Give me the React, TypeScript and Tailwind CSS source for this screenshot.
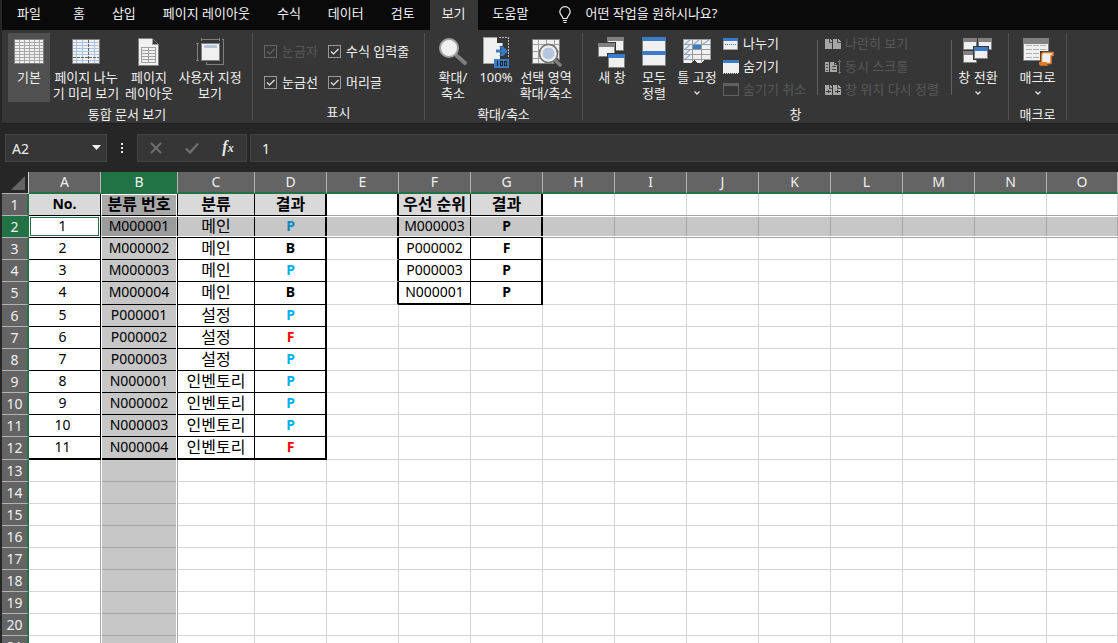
import React from "react";

type IconProps = { children: React.ReactNode };

function BigIcon({ children }: IconProps) {
  return (
    <svg className="h-8 w-8 shrink-0" viewBox="0 0 32 32" shapeRendering="crispEdges" aria-hidden="true">
      {children}
    </svg>
  );
}

function SmallIcon({ children }: IconProps) {
  return (
    <svg className="h-4 w-4 shrink-0" viewBox="0 0 16 16" shapeRendering="crispEdges" aria-hidden="true">
      {children}
    </svg>
  );
}

const range = (n: number) => Array.from({ length: n }, (_, i) => i);

function NormalIcon() {
  return (
    <BigIcon>
      <rect x="1.5" y="3.5" width="29" height="24" fill="#f0f0f0" stroke="#808080" />
      {range(5).map((i) => (
        <rect key={i} x={6 + i * 5} y="4" width="1" height="23" fill="#a8a8a8" />
      ))}
      {range(7).map((i) => (
        <rect key={i} x="2" y={6 + i * 3} width="28" height="1" fill="#a8a8a8" />
      ))}
    </BigIcon>
  );
}

function PageBreakIcon() {
  return (
    <BigIcon>
      <rect x="2.5" y="3.5" width="27" height="24" fill="#f0f0f0" stroke="#808080" />
      {[6, 12, 24].map((x) => (
        <rect key={x} x={x} y="4" width="1" height="23" fill="#a9c4e2" />
      ))}
      {[6, 9, 12, 15, 18, 24].map((y) => (
        <rect key={y} x="3" y={y} width="26" height="1" fill="#a9c4e2" />
      ))}
      <path d="M18.5 4V27" stroke="#666" strokeDasharray="3 1" />
      <path d="M3 21.5H29" stroke="#666" strokeDasharray="3 1" />
    </BigIcon>
  );
}

function PageLayoutIcon() {
  return (
    <BigIcon>
      <path d="M5.5 2.5H19.5L25.5 8.5V29.5H5.5Z" fill="#f0f0f0" stroke="#808080" />
      <path d="M19 2L26 9H19Z" fill="#363636" />
      <path d="M19.5 2.5V8.5H25.5" fill="none" stroke="#a0a0a0" />
      <path d="M19.5 2.5L25.5 8.5" fill="none" stroke="#707070" shapeRendering="auto" />
      <path d="M8.5 11.5H22.5V26.5H8.5ZM8.5 14.5H22.5M8.5 17.5H22.5M8.5 20.5H22.5M8.5 23.5H22.5M15.5 11.5V26.5" fill="none" stroke="#a0a0a0" />
    </BigIcon>
  );
}

function CustomViewIcon() {
  return (
    <BigIcon>
      <path d="M7.5 2V5M25.5 2V5M7.5 3.5H25.5M2 7.5H5M2 24.5H5M3.5 7.5V24.5" fill="none" stroke="#808080" />
      <path d="M28 3.5H29.5V28.5H12.5V26" fill="none" stroke="#808080" />
      <rect x="7.5" y="7.5" width="18" height="17" fill="#f0f0f0" stroke="#808080" />
      <rect x="10" y="9" width="13" height="3" fill="#b4c7df" />
    </BigIcon>
  );
}

function ZoomIcon() {
  return (
    <BigIcon>
      <g shapeRendering="auto">
        <path d="M19 19L28 27" stroke="#808080" strokeWidth="4" strokeLinecap="round" />
        <circle cx="12" cy="12" r="9" fill="#f0f0f0" stroke="#a0a0a0" strokeWidth="2" />
      </g>
    </BigIcon>
  );
}

function HundredIcon() {
  return (
    <BigIcon>
      <path d="M3.5 1.5H16.5L22.5 7.5V27.5H3.5Z" fill="#f0f0f0" stroke="#a0a0a0" />
      <path d="M17 1L23 7H17Z" fill="#363636" />
      <path d="M19 1.5H28.5V22" fill="none" stroke="#c0c0c0" strokeDasharray="2 1" />
      <path d="M20 10H28V24H20Z" fill="#363636" />
      <path d="M16 13.500H22L19 10.500H23L28 15L23 20H19L22 16.500H16Z" fill="#3b7cc8" shapeRendering="auto" />
      <rect x="14" y="23" width="15" height="9" fill="#3b7cc8" />
      <path d="M17.500 25V30M20.500 25.500H22.500V29.500H20.500ZM24.500 25.500H26.500V29.500H24.500Z" stroke="#222" fill="none" />
    </BigIcon>
  );
}

function ZoomSelectionIcon() {
  return (
    <BigIcon>
      <rect x="2.500" y="3.500" width="27" height="24" fill="#f0f0f0" stroke="#808080" />
      <path d="M8.500 4V27M16.500 4V27M24.500 4V27M3 8.500H29M3 15.500H29M3 22.500H29" stroke="#a0a0a0" />
      <g shapeRendering="auto">
        <path d="M24 23L30 29" stroke="#363636" strokeWidth="6" />
        <path d="M24 23L30 29" stroke="#808080" strokeWidth="3.500" strokeLinecap="round" />
        <circle cx="18.500" cy="17.500" r="9" fill="#f0f0f0" stroke="#777" strokeWidth="2" />
        <circle cx="18.500" cy="17.500" r="7" fill="#b4c7df" stroke="#f0f0f0" strokeWidth="2" />
      </g>
    </BigIcon>
  );
}

function Pane({ x, y, w, h, top }: { x: number; y: number; w: number; h: number; top: string }) {
  return (
    <g>
      <rect x={x - 1} y={y - 1} width={w + 2} height={h + 2} fill="#363636" />
      <rect x={x} y={y} width={w} height={h} fill="#808080" />
      <rect x={x + 1} y={y + 4} width={w - 2} height={h - 5} fill="#f0f0f0" />
      <rect x={x} y={y} width={w} height="4" fill={top} />
    </g>
  );
}

function NewWindowIcon() {
  return (
    <BigIcon>
      <Pane x={11} y={1} w={17} h={14} top="#808080" />
      <Pane x={2} y={7} w={17} h={14} top="#808080" />
      <Pane x={12} y={18} w={17} h={14} top="#3b7cc8" />
    </BigIcon>
  );
}

function ArrangeIcon() {
  return (
    <BigIcon>
      <rect x="4" y="1" width="24" height="29" fill="#808080" />
      <rect x="5" y="5" width="22" height="24" fill="#f0f0f0" />
      <rect x="4" y="1" width="24" height="4" fill="#3b7cc8" />
      <rect x="4" y="15" width="24" height="4" fill="#3b7cc8" />
    </BigIcon>
  );
}

function FreezeIcon() {
  return (
    <BigIcon>
      <path d="M2 3H30V23H24L20 27H16L13 24L10 27H2Z" fill="#f0f0f0" />
      <path d="M2.500 27V3.500H29.500V23.500M11.500 3.500V26M20.500 3.500V26M2.500 8.500H29.500M2.500 13.500H29.500M2.500 18.500H29.500M2.500 23.500H29.500" fill="none" stroke="#9a9a9a" />
      <rect x="12" y="9" width="8" height="4" fill="#3b7cc8" />
      <path d="M4 8L9 4M13 8L18 4M22 8L28 4M4 13L9 9M4 18L9 14M4 23L9 19" stroke="#8fb2dc" strokeWidth="1.500" shapeRendering="auto" />
    </BigIcon>
  );
}

function SwitchIcon() {
  return (
    <BigIcon>
      <Pane x={1} y={2} w={14} h={12} top="#808080" />
      <Pane x={16} y={2} w={14} h={12} top="#808080" />
      <Pane x={1} y={15} w={14} h={12} top="#808080" />
      <Pane x={12} y={11} w={14} h={12} top="#3b7cc8" />
    </BigIcon>
  );
}

function MacroIcon() {
  return (
    <BigIcon>
      <Pane x={1} y={2} w={26} h={23} top="#808080" />
      <rect x="2" y="6" width="24" height="2" fill="#808080" />
      <path d="M4 9.500H24M4 13.500H24M4 17.500H18M4 21.500H18" stroke="#b0b0b0" strokeDasharray="6 1" />
      <path d="M18 15H31V20H29V29H18Z" fill="#363636" />
      <g shapeRendering="auto">
        <path d="M21 16.500H31V19.500H29V27.500H19.500V18Z" fill="#f0f0f0" stroke="#e07a24" strokeWidth="1.500" />
        <path d="M17 26H25V28.500L27 29.800H18.500Q17 29.500 17 28Z" fill="#e07a24" />
      </g>
    </BigIcon>
  );
}

function SplitIcon() {
  return (
    <SmallIcon>
      <rect x=".5" y="2.500" width="14" height="11" fill="#f0f0f0" stroke="#a0a0a0" />
      <rect x="0" y="2" width="15" height="3" fill="#3b7cc8" />
      <path d="M2 8.500H13" stroke="#3b7cc8" strokeDasharray="1 1" />
    </SmallIcon>
  );
}

function HideIcon() {
  return (
    <SmallIcon>
      <rect x="0" y="2" width="16" height="12" fill="#f0f0f0" />
      <rect x="0" y="1" width="16" height="3" fill="#3b7cc8" />
      <path d="M0 14.500H16" fill="none" stroke="#d0d0d0" strokeDasharray="1 1" />
    </SmallIcon>
  );
}

function UnhideIcon() {
  return (
    <SmallIcon>
      <rect x=".5" y="1.500" width="15" height="12" fill="none" stroke="#606060" />
      <rect x="0" y="1" width="16" height="3" fill="#606060" />
    </SmallIcon>
  );
}

function PairIcon({ mark }: { mark?: string }) {
  return (
    <SmallIcon>
      <path d="M0 3H5L7 5V13H0ZM8 3H13L16 5V13H8Z" fill="#a6a6a6" />
      <path d="M4.500 3V6.500H7M12.500 3V6.500H16" fill="none" stroke="#4a4a4a" />
      {mark && <path d={mark} stroke="#363636" fill="none" />}
    </SmallIcon>
  );
}

function SyncIcon() {
  return (
    <SmallIcon>
      <path d="M0 3H4V13H0ZM5 3H10L12 6V13H5Z" fill="#a6a6a6" />
      <path d="M1 5.500H3M1 8.500H3M1 11.500H3M7 7.500H11M7 10.500H11M9.500 3V5.500H12" fill="none" stroke="#4a4a4a" />
      <path d="M14.500 1V15M13 2.500H16M13 13.500H16" fill="none" stroke="#777" />
    </SmallIcon>
  );
}

function Chevron() {
  return (
    <svg className="h-4 w-2" viewBox="0 0 8 16" aria-hidden="true">
      <path d="M1.500 6.500L4 9L6.500 6.500" fill="none" stroke="#e0e0e0" strokeWidth="1.300" />
    </svg>
  );
}

type BigButtonProps = { icon: React.ReactNode; lines: string[]; width: string; active?: boolean; menu?: boolean };

function BigButton({ icon, lines, width, active, menu }: BigButtonProps) {
  return (
    <button
      type="button"
      className={`flex h-[69px] shrink-0 flex-col items-center pt-[3px] ${width} ${active ? "bg-[#505050]" : ""}`}
    >
      {icon}
      <span className="flex flex-col items-center pt-px leading-4 whitespace-nowrap">
        {lines.map((l) => (
          <span key={l}>{l}</span>
        ))}
      </span>
      {menu && <Chevron />}
    </button>
  );
}

function SmallButton({ icon, label, disabled }: { icon: React.ReactNode; label: string; disabled?: boolean }) {
  return (
    <button
      type="button"
      disabled={disabled}
      className={`flex h-[23px] items-center gap-1 pb-[2px] whitespace-nowrap ${disabled ? "text-[#585858]" : ""}`}
    >
      {icon}
      <span>{label}</span>
    </button>
  );
}

function Check({ label, disabled }: { label: string; disabled?: boolean }) {
  return (
    <label className={`flex h-[31px] items-center gap-[5px] whitespace-nowrap ${disabled ? "text-[#585858]" : ""}`}>
      <span className="relative block h-[13px] w-[13px] shrink-0">
        <input
          type="checkbox"
          defaultChecked
          disabled={disabled}
          className={`block h-[13px] w-[13px] appearance-none border ${disabled ? "border-[#666]" : "border-[#999]"}`}
        />
        <svg className="pointer-events-none absolute inset-0" viewBox="0 0 13 13" aria-hidden="true">
          <path d="M3 6.500L5.500 9L10.500 4" fill="none" stroke={disabled ? "#666" : "#e8e8e8"} strokeWidth="1.200" />
        </svg>
      </span>
      {label}
    </label>
  );
}

type GroupProps = { label: string; width: string; inset?: string; children: React.ReactNode };

function Group({ label, width, inset = "", children }: GroupProps) {
  return (
    <section aria-label={label} className={`my-[3px] flex shrink-0 flex-col border-r border-[#505050] ${width}`}>
      <div className={`flex h-[70px] ${inset}`}>{children}</div>
      <div className="pt-1 text-center leading-4">{label}</div>
    </section>
  );
}

function Divider() {
  return <div className="mt-[7px] h-[55px] w-px shrink-0 bg-[#606060]" />;
}

const tabs = ["파일", "홈", "삽입", "페이지 레이아웃", "수식", "데이터", "검토", "보기", "도움말"];

function MenuBar() {
  return (
    <nav className="flex h-[30px] items-stretch bg-[#0a0a0a] pl-[3px]">
      {tabs.map((t, i) => (
        <button
          key={t}
          type="button"
          className={`mr-[3px] px-3 pb-[2px] whitespace-nowrap first:mr-2 ${i === 7 ? "bg-[#363636]" : ""}`}
        >
          {t}
        </button>
      ))}
      <button type="button" className="ml-4 flex items-center gap-[14px] pb-[2px] whitespace-nowrap">
        <svg className="mt-[2px] h-[18px] w-3" viewBox="0 0 12 18" fill="none" stroke="#f0f0f0" strokeWidth="1.200" aria-hidden="true">
          <path d="M4 12.500C4 10 .8 9 .8 5.800A5.200 5.200 0 0 1 11.200 5.800C11.200 9 8 10 8 12.500ZM4 14.500H8M4.500 16.500H7.500" />
        </svg>
        <span>어떤 작업을 원하시나요?</span>
      </button>
    </nav>
  );
}

function Ribbon() {
  return (
    <div className="flex h-[94px] border-b border-[#1e1e1e] bg-[#363636]">
      <Group label="통합 문서 보기" width="w-[251px]" inset="pl-[6px]">
        <BigButton icon={<NormalIcon />} lines={["기본"]} width="w-[42px]" active />
        <BigButton icon={<PageBreakIcon />} lines={["페이지 나누", "기 미리 보기"]} width="w-[72px]" />
        <BigButton icon={<PageLayoutIcon />} lines={["페이지", "레이아웃"]} width="w-[54px]" />
        <BigButton icon={<CustomViewIcon />} lines={["사용자 지정", "보기"]} width="w-[68px]" />
      </Group>
      <Group label="표시" width="w-[172px]">
        <div className="grid grid-cols-[64px_auto] content-start pt-[3px] pl-[11px]">
          <Check label="눈금자" disabled />
          <Check label="수식 입력줄" />
          <Check label="눈금선" />
          <Check label="머리글" />
        </div>
      </Group>
      <Group label="확대/축소" width="w-[158px]" inset="pl-[7px]">
        <BigButton icon={<ZoomIcon />} lines={["확대/", "축소"]} width="w-[42px]" />
        <BigButton icon={<HundredIcon />} lines={["100%"]} width="w-[44px]" />
        <BigButton icon={<ZoomSelectionIcon />} lines={["선택 영역", "확대/축소"]} width="w-[56px]" />
      </Group>
      <Group label="창" width="w-[426px]" inset="pl-[9px]">
        <BigButton icon={<NewWindowIcon />} lines={["새 창"]} width="w-10" />
        <BigButton icon={<ArrangeIcon />} lines={["모두", "정렬"]} width="w-11" />
        <BigButton icon={<FreezeIcon />} lines={["틀 고정"]} width="w-[42px]" menu />
        <div className="flex w-[99px] flex-col pl-[5px]">
          <SmallButton icon={<SplitIcon />} label="나누기" />
          <SmallButton icon={<HideIcon />} label="숨기기" />
          <SmallButton icon={<UnhideIcon />} label="숨기기 취소" disabled />
        </div>
        <Divider />
        <div className="flex w-[133px] flex-col pl-[7px]">
          <SmallButton icon={<PairIcon />} label="나란히 보기" disabled />
          <SmallButton icon={<SyncIcon />} label="동시 스크롤" disabled />
          <SmallButton icon={<PairIcon mark="M1 9.500H6M3.500 8V11M10 9.500H15M12.500 8V11" />} label="창 위치 다시 정렬" disabled />
        </div>
        <Divider />
        <BigButton icon={<SwitchIcon />} lines={["창 전환"]} width="w-[52px]" menu />
      </Group>
      <Group label="매크로" width="w-[58px]">
        <BigButton icon={<MacroIcon />} lines={["매크로"]} width="w-[57px]" menu />
      </Group>
    </div>
  );
}

function FormulaBar() {
  return (
    <div className="flex h-12 items-center pt-px pr-0 pb-px pl-[3px]">
      <div className="relative h-7 w-[102px] shrink-0">
        <input
          aria-label="이름 상자"
          defaultValue="A2"
          className="h-7 w-full border border-[#444] bg-[#363636] pl-[6px] text-sm text-[#f0f0f0]"
        />
        <svg className="pointer-events-none absolute top-[11px] right-[6px] h-[5px] w-[9px]" viewBox="0 0 9 5" aria-hidden="true">
          <path d="M0 0H9L4.500 5Z" fill="#f0f0f0" />
        </svg>
      </div>
      <svg className="h-7 w-[30px] shrink-0" viewBox="0 0 30 28" fill="#e8e8e8" aria-hidden="true">
        <path d="M14 9H16V11H14ZM14 13H16V15H14ZM14 17H16V19H14Z" />
      </svg>
      <div className="flex h-7 w-[110px] shrink-0 items-center border border-[#444] bg-[#363636]">
        <button type="button" aria-label="취소" className="flex flex-1 justify-center">
          <svg className="h-3 w-3" viewBox="0 0 12 12" aria-hidden="true">
            <path d="M1 1L11 11M11 1L1 11" stroke="#707070" strokeWidth="1.800" />
          </svg>
        </button>
        <button type="button" aria-label="입력" className="flex flex-1 justify-center">
          <svg className="h-3 w-[14px]" viewBox="0 0 14 12" aria-hidden="true">
            <path d="M1 6.500L5 10.500L13 1.500" fill="none" stroke="#707070" strokeWidth="2.400" />
          </svg>
        </button>
        <button type="button" aria-label="함수 삽입" className="flex-1 pb-[2px] font-['Liberation_Serif',serif] text-base leading-5 font-bold text-[#e8e8e8] italic">
          f<span className="text-xs">x</span>
        </button>
      </div>
      <input
        aria-label="수식 입력줄"
        defaultValue="1"
        className="ml-[3px] h-7 min-w-0 flex-1 border border-r-0 border-[#444] bg-[#363636] pl-[11px] text-sm text-[#f0f0f0]"
      />
    </div>
  );
}

const columns = "ABCDEFGHIJKLMNO".split("");

const results: [string, string, string, string][] = [
  ["1", "M000001", "메인", "P"],
  ["2", "M000002", "메인", "B"],
  ["3", "M000003", "메인", "P"],
  ["4", "M000004", "메인", "B"],
  ["5", "P000001", "설정", "P"],
  ["6", "P000002", "설정", "F"],
  ["7", "P000003", "설정", "P"],
  ["8", "N000001", "인벤토리", "P"],
  ["9", "N000002", "인벤토리", "P"],
  ["10", "N000003", "인벤토리", "P"],
  ["11", "N000004", "인벤토리", "F"],
];

const priority: [string, string][] = [
  ["M000003", "P"],
  ["P000002", "F"],
  ["P000003", "P"],
  ["N000001", "P"],
];

const resultColor: Record<string, string> = { P: "text-[#00b0f0]", F: "text-[#ff0000]", B: "text-[#000000]" };

function cellText(row: number, col: number): string {
  if (row === 1) return ["No.", "분류 번호", "분류", "결과", "", "우선 순위", "결과"][col] ?? "";
  if (col < 4) return results[row - 2]?.[col] ?? "";
  if (col === 5 || col === 6) return priority[row - 2]?.[col - 5] ?? "";
  return "";
}

function cellClass(row: number, col: number): string {
  const main = row <= 12 && col <= 3;
  const side = row <= 5 && (col === 5 || col === 6);
  const out: string[] = [];

  if (main || side) out.push("border-b-black");
  else out.push("border-b-[#d4d4d4]");
  if ((main && row === 12) || (row === 5 && col === 5)) out.push("border-b-2");
  else out.push("border-b");

  const thickRight = (main && col === 3) || (row <= 5 && (col === 4 || col === 6));
  if (thickRight) out.push("border-r-2 border-r-black");
  else if (main || side) out.push("border-r border-r-black");
  else out.push("border-r border-r-[#d4d4d4]");

  if (row === 1 && (main || side)) out.push("bg-[#d9d9d9] font-bold");
  if (row > 1 && main && col === 3) out.push("font-bold", resultColor[cellText(row, col)]);
  else out.push("text-[#000000]");
  if (row > 1 && side && col === 6) out.push("font-bold");

  out.push(row > 1 && col === 0 ? "pr-1" : thickRight ? "pl-px" : "");
  out.push(/[가-힣]/.test(cellText(row, col)) ? "text-base" : "text-sm");
  return out.join(" ");
}

function Sheet() {
  return (
    <div className="relative min-h-0 flex-1 overflow-hidden bg-white">
      <table className="w-full table-fixed border-separate border-spacing-0 text-center">
        <colgroup>
          <col className="w-[27px]" />
          {columns.map((c) => (
            <col key={c} className={c === "B" || c === "C" ? "w-[77px]" : c === "O" ? "" : "w-[72px]"} />
          ))}
        </colgroup>
        <thead>
          <tr className="h-[22px]">
            <th className="border-r border-b border-r-[#d0d0d0] border-b-[#b0b0b0] bg-[#262626] p-0">
              <svg className="ml-[9px] h-[14px] w-[14px]" viewBox="0 0 14 14" aria-hidden="true">
                <path d="M14 0V14H0Z" fill="#646464" />
              </svg>
            </th>
            {columns.map((c) => (
              <th
                key={c}
                scope="col"
                className={`border-r border-b-2 border-r-[#b4b4b4] border-b-[#217346] p-0 text-sm leading-5 font-normal text-[#f0f0f0] ${c === "B" ? "bg-[#217346]" : "bg-[#646464]"}`}
              >
                {c}
              </th>
            ))}
          </tr>
        </thead>
        <tbody>
          {range(21).map((i) => {
            const row = i + 1;
            return (
              <tr key={row} className={row === 5 || row === 12 ? "h-[23px]" : "h-[22px]"}>
                <th
                  scope="row"
                  className={`border-r-2 border-b border-r-[#217346] border-b-[#b4b4b4] p-0 text-sm leading-5 font-normal text-[#f0f0f0] ${row === 2 ? "bg-[#217346]" : "bg-[#646464]"}`}
                >
                  {row}
                </th>
                {columns.map((c, col) => (
                  <td key={c} className={`overflow-hidden py-0 whitespace-nowrap ${cellClass(row, col)}`}>
                    <div className="h-5 leading-[18px]">{cellText(row, col)}</div>
                  </td>
                ))}
              </tr>
            );
          })}
        </tbody>
      </table>
      <div className="pointer-events-none absolute top-[22px] bottom-0 left-[98px] w-[78px] border-x border-black/22">
        <div className="h-full border-x border-t border-white bg-black/22 bg-clip-padding" />
      </div>
      <div className="pointer-events-none absolute top-[43px] right-0 left-[99px] h-[23px] border-y border-black/22">
        <div className="h-full border-y border-white bg-black/22 bg-clip-padding" />
      </div>
      <div className="pointer-events-none absolute top-[44px] left-[27px] h-[21px] w-[71px] border border-white">
        <div className="h-full border border-[#217346]" />
      </div>
    </div>
  );
}

export default function App() {
  return (
    <div className="flex h-screen flex-col overflow-hidden bg-[#262626] pl-[2px] font-['Noto_Sans','Noto_Sans_CJK_KR',sans-serif] text-[13px] text-[#f0f0f0]">
      <MenuBar />
      <Ribbon />
      <FormulaBar />
      <Sheet />
    </div>
  );
}
